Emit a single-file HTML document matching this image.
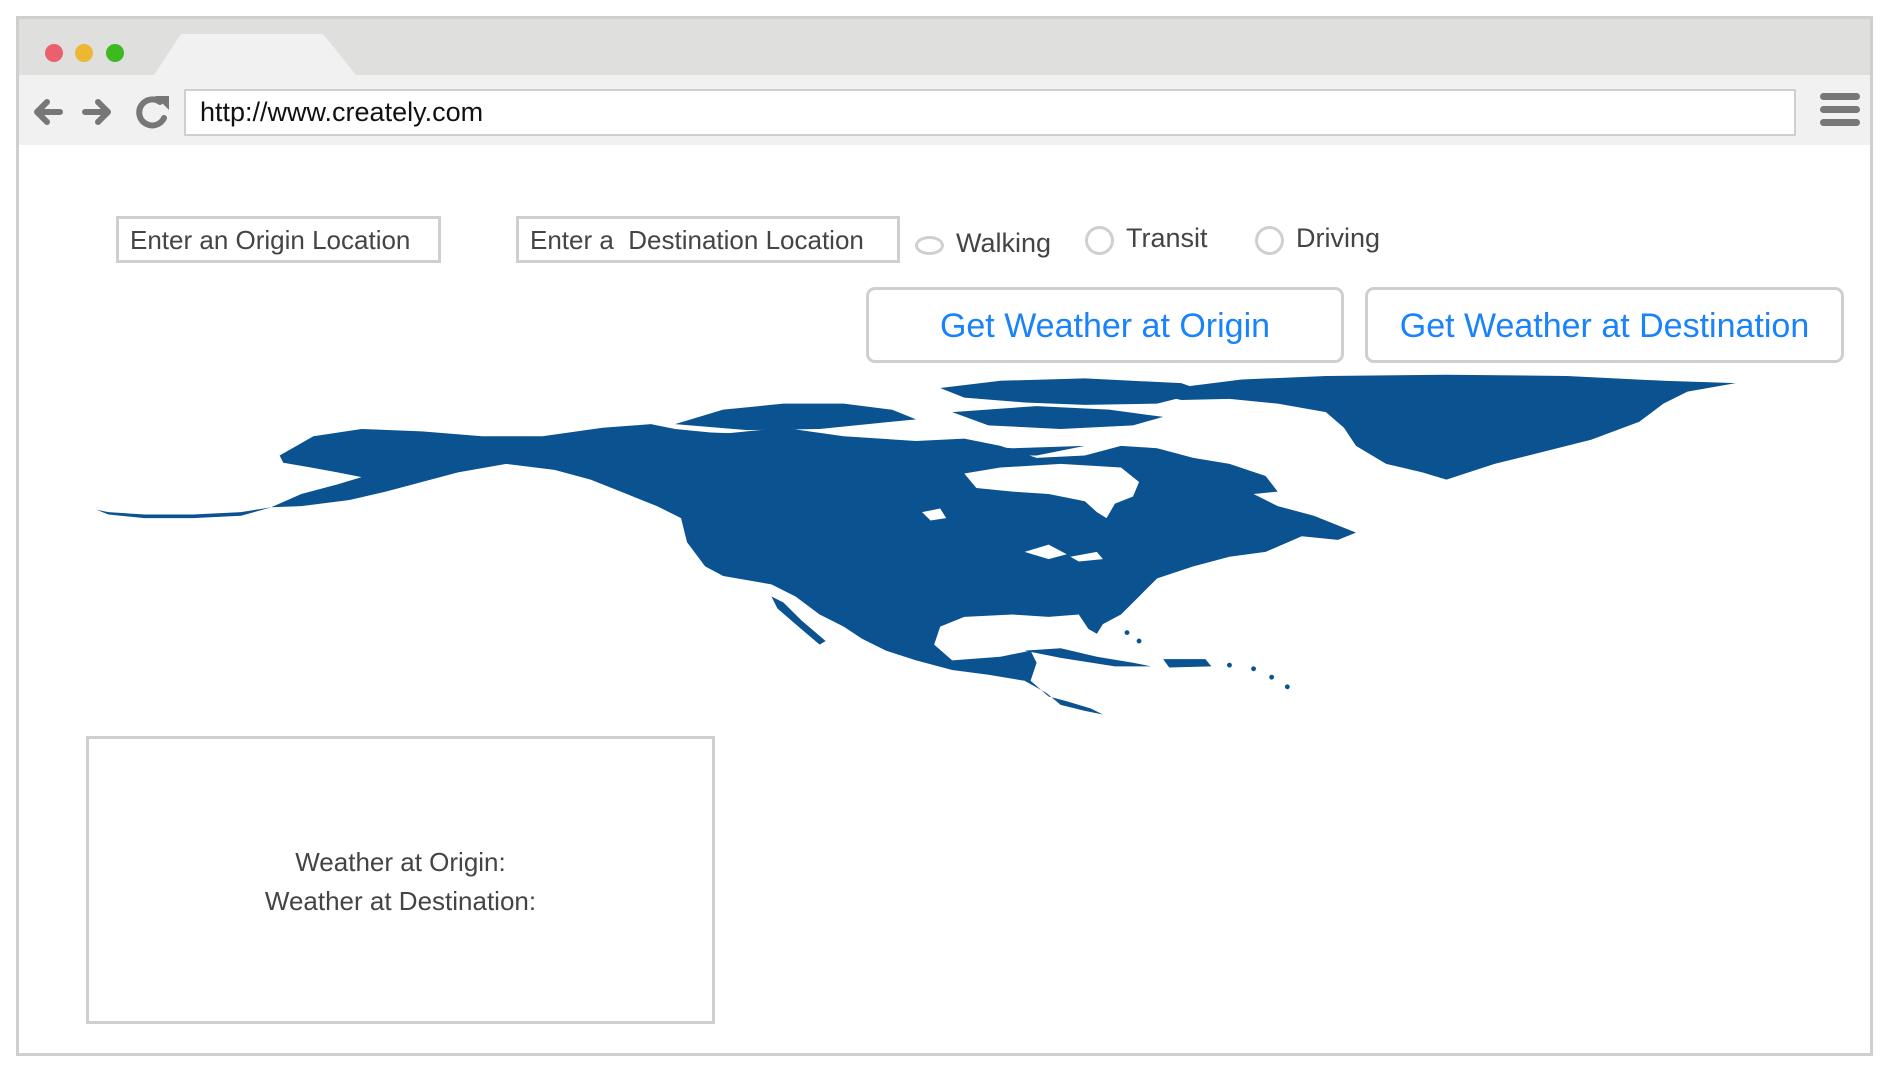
<!DOCTYPE html>
<html><head><meta charset="utf-8">
<style>
*{margin:0;padding:0;box-sizing:border-box}
body{width:1890px;height:1070px;background:#fff;position:relative;overflow:hidden;font-family:"Liberation Sans",sans-serif;color:#444}
.a{position:absolute}
.frame{left:16px;top:16px;width:1857px;height:1040px;border:3px solid #cfcfcf;background:#fff}
.tabbar{left:19px;top:19px;width:1851px;height:56px;background:#dfe0de}
.toolbar{left:19px;top:75px;width:1851px;height:70px;background:#f1f1f1}
.dot{width:18px;height:18px;border-radius:50%;top:44px}
.url{left:184px;top:89px;width:1612px;height:47px;background:#fff;border:2px solid #cfcfcf;font-size:27px;color:#111;padding-left:14px;line-height:43px}
.ham{left:1820px;width:40px;height:7px;border-radius:4px;background:#777}
.inp{top:216px;height:47px;border:3px solid #cfcfcf;font-size:26px;line-height:43px;padding-left:11px;color:#444;white-space:pre}
.lbl{font-size:27px;color:#444}
.rad{border:3px solid #cfcfcf;border-radius:50%}
.btn{top:287px;height:76px;border:3px solid #cfcfcf;border-radius:9px;font-size:34px;color:#1a82fb;text-align:center;line-height:72px}
.res{left:86px;top:736px;width:629px;height:288px;border:3px solid #cfcfcf;font-size:26px;text-align:center;padding-top:104px;line-height:39px}
</style></head><body>
<div class="a frame"></div>
<div class="a tabbar"></div>
<svg class="a" style="left:0;top:0" width="400" height="80"><polygon points="154,75 181,34 323,34 356,75" fill="#f1f1f1"/></svg>
<div class="a toolbar"></div>
<div class="a dot" style="left:45px;background:#ec5f6e"></div>
<div class="a dot" style="left:75px;background:#edb733"></div>
<div class="a dot" style="left:106px;background:#3cba1f"></div>
<svg class="a" style="left:28px;top:92px" width="150" height="40" viewBox="0 0 150 40">
<g stroke="#777" stroke-width="6" fill="none" stroke-linecap="round" stroke-linejoin="round">
<path d="M32 20H10M19 10L9 20L19 30"/>
<path d="M57 20H79M70 10L80 20L70 30"/>
<path d="M132 10A13 13 0 1 0 136 26"/>
</g>
<polygon points="127,4 141,4 141,18" fill="#777"/>
</svg>
<div class="a url">http://www.creately.com</div>
<div class="a ham" style="top:93px"></div>
<div class="a ham" style="top:106px"></div>
<div class="a ham" style="top:119px"></div>

<div class="a inp" style="left:116px;width:325px">Enter an Origin Location</div>
<div class="a inp" style="left:516px;width:384px">Enter a  Destination Location</div>
<div class="a rad" style="left:915px;top:236px;width:29px;height:19px"></div>
<div class="a lbl" style="left:956px;top:228px">Walking</div>
<div class="a rad" style="left:1085px;top:226px;width:29px;height:29px"></div>
<div class="a lbl" style="left:1126px;top:223px">Transit</div>
<div class="a rad" style="left:1255px;top:226px;width:29px;height:29px"></div>
<div class="a lbl" style="left:1296px;top:223px">Driving</div>

<div class="a btn" style="left:866px;width:478px">Get Weather at Origin</div>
<div class="a btn" style="left:1365px;width:479px">Get Weather at Destination</div>

<svg class="a" style="left:0;top:0" width="1890" height="1070" viewBox="0 0 1568 888" preserveAspectRatio="none">
<g fill="#0a5290">
<polygon points="232,378 260,362 300,356 350,358 400,362 450,362 500,355 540,352 560,356 600,360 650,355 700,362 760,366 800,364 830,370 860,380 900,378 930,370 960,372 990,380 1020,385 1050,395 1060,408 1040,410 1060,420 1090,428 1125,442 1110,448 1080,445 1050,458 1020,462 990,470 960,480 945,495 930,510 915,518 910,526 903,522 895,510 870,512 840,510 800,512 780,520 775,535 790,548 830,545 855,540 860,550 855,565 870,578 885,582 905,588 915,593 900,590 880,585 868,575 850,565 820,560 790,556 760,548 735,540 715,530 700,520 680,510 660,495 640,485 600,478 585,470 570,450 565,430 545,420 520,410 490,398 460,390 420,385 380,392 350,400 320,408 290,415 250,420 225,421 250,410 280,402 300,396 280,392 258,388 235,384"/>
<polygon points="780,322 830,316 900,314 980,318 1000,325 960,335 900,336 850,334 800,330"/>
<polygon points="560,352 600,340 650,335 700,335 740,340 760,348 720,352 680,356 620,357"/>
<polygon points="790,342 860,337 920,340 965,346 940,353 880,356 820,353"/>
<polygon points="560,358 620,360 700,364 780,368 840,372 900,370 860,378 780,378 700,372 620,370"/>
<polygon points="950,325 1030,315 1100,312 1200,311 1300,312 1380,316 1440,318 1400,325 1380,335 1360,350 1320,365 1280,375 1240,385 1200,398 1180,392 1150,385 1125,370 1115,355 1100,342 1060,335 1020,331 980,332"/>
<polygon points="850,540 880,538 910,545 940,550 955,553 925,553 880,546"/>
<polygon points="965,547 1000,547 1005,553 970,554"/>
<polygon points="640,495 650,500 665,515 685,532 680,535 660,518 645,505"/>
<polygon points="80,423 90,425 120,427 160,427 200,425 225,421 200,428 160,430 120,430 90,427"/>
<circle cx="1020" cy="552" r="2"/><circle cx="1040" cy="555" r="2"/><circle cx="1055" cy="562" r="2"/><circle cx="1068" cy="570" r="2"/><circle cx="935" cy="525" r="2"/><circle cx="945" cy="532" r="2"/>
</g>
<g fill="#fff">
<polygon points="800,393 830,388 880,385 930,388 945,400 940,412 925,418 918,430 910,425 900,416 870,410 840,408 810,405"/>
<polygon points="850,458 870,452 885,460 870,464"/>
<polygon points="888,462 910,458 915,464 895,466"/>
<polygon points="765,425 780,422 785,430 772,432"/>
</g>
</svg>

<div class="a res">Weather at Origin:<br>Weather at Destination:</div>
</body></html>
